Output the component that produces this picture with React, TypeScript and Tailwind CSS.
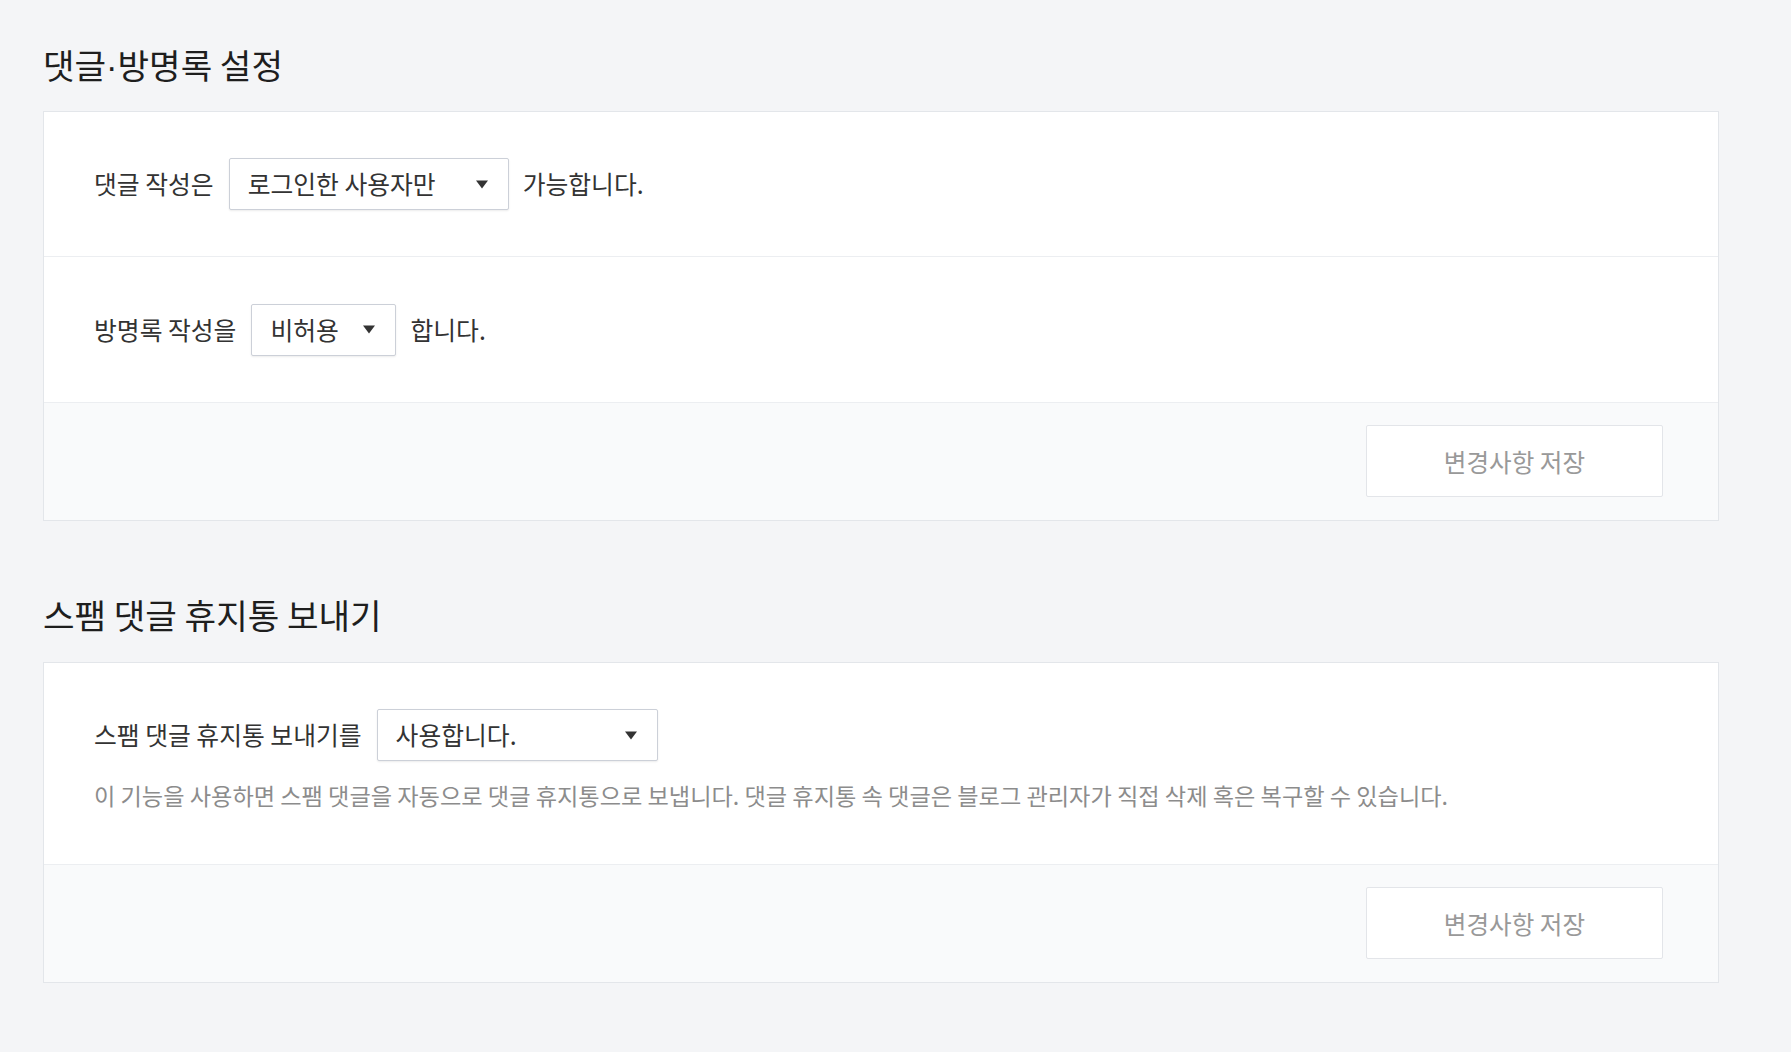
import React from 'react';

const font = { fontFamily: '"Noto Sans CJK KR", "Noto Sans", sans-serif' };

function Caret() {
  return (
    <svg width="12" height="9" viewBox="0 0 12 9" className="shrink-0">
      <path d="M0 0.5 L12 0.5 L6 8.5 Z" fill="#333" />
    </svg>
  );
}

function Select({ value, width }: { value: string; width: string }) {
  return (
    <div
      className={`${width} h-[52px] flex items-center justify-between pl-[18px] pr-[20px] bg-white border border-[#ccd0d8] rounded-[2px] shadow-[0_1px_2px_rgba(0,0,0,0.08)] text-[#333]`}
    >
      <span>{value}</span>
      <Caret />
    </div>
  );
}

function SaveBar() {
  return (
    <div className="flex justify-end border-t border-[#eceef1] bg-[#f9fafb] pt-[22px] pb-[23px] pr-[55px]">
      <button className="w-[297px] h-[72px] bg-white border border-[#e3e5e9] rounded-[2px] text-[#999] text-[24.6px]">
        변경사항 저장
      </button>
    </div>
  );
}

export default function App() {
  return (
    <div className="min-h-screen bg-[#f4f5f7] pl-[43px] pb-[70px]" style={font}>
      <div className="w-[1676px]">
        {/* 댓글·방명록 설정 */}
        <h2 className="pt-[44px] h-[84px] text-[34.3px] leading-[40px] text-[#1e1e1e]">
          댓글<span style={{ fontFamily: '"Liberation Sans", sans-serif' }}>·</span>방명록 설정
        </h2>
        <div className="mt-[27px] bg-white border border-[#e3e6ea] text-[24.8px] text-[#333]">
          <div className="h-[144px] flex items-center pl-[50px]">
            <span>댓글 작성은</span>
            <div className="ml-[15px] mr-[14px]">
              <Select value="로그인한 사용자만" width="w-[280px]" />
            </div>
            <span>가능합니다.</span>
          </div>
          <div className="h-[146px] flex items-center pl-[50px] border-t border-[#eceef1]">
            <span>방명록 작성을</span>
            <div className="ml-[15px] mr-[14px]">
              <Select value="비허용" width="w-[145px]" />
            </div>
            <span>합니다.</span>
          </div>
          <SaveBar />
        </div>

        {/* 스팸 댓글 휴지통 보내기 */}
        <h2 className="mt-[73px] text-[34.3px] leading-[40px] text-[#1e1e1e]">
          스팸 댓글 휴지통 보내기
        </h2>
        <div className="mt-[28px] bg-white border border-[#e3e6ea] text-[24.8px] text-[#333]">
          <div className="pt-[46px] pb-[54px] pl-[50px]">
            <div className="flex items-center">
              <span>스팸 댓글 휴지통 보내기를</span>
              <div className="ml-[15px]">
                <Select value="사용합니다." width="w-[281px]" />
              </div>
            </div>
            <p className="mt-[19px] text-[23.2px] leading-[30px] text-[#8c8c8c]">
              이 기능을 사용하면 스팸 댓글을 자동으로 댓글 휴지통으로 보냅니다. 댓글 휴지통 속 댓글은 블로그 관리자가 직접 삭제 혹은 복구할 수 있습니다.
            </p>
          </div>
          <SaveBar />
        </div>
      </div>
    </div>
  );
}
